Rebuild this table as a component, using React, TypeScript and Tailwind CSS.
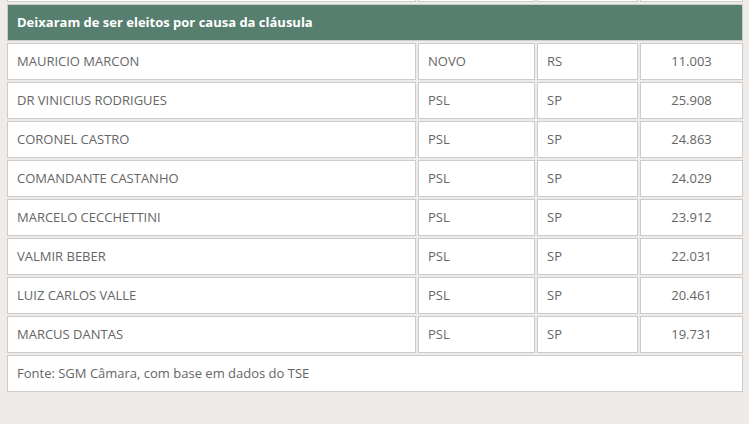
import React from "react";

const rows: [string, string, string, string][] = [
  ["MAURICIO MARCON", "NOVO", "RS", "11.003"],
  ["DR VINICIUS RODRIGUES", "PSL", "SP", "25.908"],
  ["CORONEL CASTRO", "PSL", "SP", "24.863"],
  ["COMANDANTE CASTANHO", "PSL", "SP", "24.029"],
  ["MARCELO CECCHETTINI", "PSL", "SP", "23.912"],
  ["VALMIR BEBER", "PSL", "SP", "22.031"],
  ["LUIZ CARLOS VALLE", "PSL", "SP", "20.461"],
  ["MARCUS DANTAS", "PSL", "SP", "19.731"],
];

const cell =
  "h-[37px] border border-[#cccccc] bg-white flex items-center text-[13px] text-[#666666]";

function Row({ r }: { r: [string, string, string, string] }) {
  return (
    <div className="flex gap-[2px]">
      <div className={`${cell} w-[409px] pl-[9px]`}>{r[0]}</div>
      <div className={`${cell} w-[117px] pl-[9px]`}>{r[1]}</div>
      <div className={`${cell} w-[101px] pl-[9px]`}>{r[2]}</div>
      <div className={`${cell} w-[103px] justify-center`}>{r[3]}</div>
    </div>
  );
}

export default function App() {
  return (
    <div
      className="w-[749px] h-[424px] overflow-hidden bg-[#efebe9]"
      style={{ fontFamily: '"Open Sans", "Liberation Sans", sans-serif' }}
    >
      <div className="mt-[-35px] ml-[7px] flex flex-col gap-[2px]">
        <Row r={["", "", "", ""]} />
        <div className="h-[37px] w-[736px] border border-[#cccccc] bg-[#577f6f] flex items-center pl-[9px] text-[13px] font-bold text-white">
          Deixaram de ser eleitos por causa da cláusula
        </div>
        {rows.map((r, i) => (
          <Row key={i} r={r} />
        ))}
        <div className={`${cell} w-[736px] pl-[9px]`}>
          Fonte: SGM Câmara, com base em dados do TSE
        </div>
      </div>
    </div>
  );
}
